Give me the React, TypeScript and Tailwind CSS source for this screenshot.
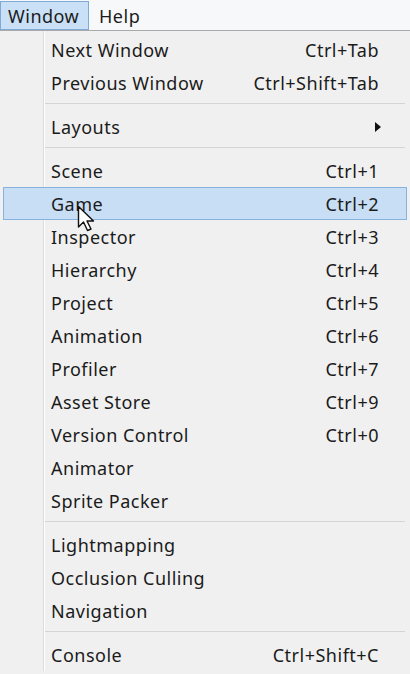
type Item = { label: string; shortcut?: string; submenu?: boolean; active?: boolean } | "sep";

const items: Item[] = [
  { label: "Next Window", shortcut: "Ctrl+Tab" },
  { label: "Previous Window", shortcut: "Ctrl+Shift+Tab" },
  "sep",
  { label: "Layouts", submenu: true },
  "sep",
  { label: "Scene", shortcut: "Ctrl+1" },
  { label: "Game", shortcut: "Ctrl+2", active: true },
  { label: "Inspector", shortcut: "Ctrl+3" },
  { label: "Hierarchy", shortcut: "Ctrl+4" },
  { label: "Project", shortcut: "Ctrl+5" },
  { label: "Animation", shortcut: "Ctrl+6" },
  { label: "Profiler", shortcut: "Ctrl+7" },
  { label: "Asset Store", shortcut: "Ctrl+9" },
  { label: "Version Control", shortcut: "Ctrl+0" },
  { label: "Animator" },
  { label: "Sprite Packer" },
  "sep",
  { label: "Lightmapping" },
  { label: "Occlusion Culling" },
  { label: "Navigation" },
  "sep",
  { label: "Console", shortcut: "Ctrl+Shift+C" },
];

function Cursor() {
  return (
    <svg
      className="absolute left-[77px] top-[205px]"
      width="20"
      height="28"
      viewBox="0 0 20 28"
    >
      <path
        d="M1.5 1.5 L1.5 22 L6.5 17 L10.5 25.5 L14 24 L10 16 L16.5 16 Z"
        fill="#ffffff"
        stroke="#111111"
        strokeWidth="1.4"
        strokeLinejoin="round"
      />
    </svg>
  );
}

export default function App() {
  return (
    <div
      className="relative w-[410px] h-[674px] overflow-hidden bg-[#f0f0f0] text-[#1b1b1b] text-[18px] tracking-[0.5px]"
      style={{ fontFamily: '"Noto Sans", "Open Sans", sans-serif' }}
    >
      {/* menu bar */}
      <div className="flex h-[31px] items-stretch bg-[#f7f8f9] border-b border-[#a9a9a9] pt-[1px]">
        <div className="flex items-center px-[7px] w-[89px] bg-[#c9e0f7] border border-[#7fa9d6] leading-none">
          Window
        </div>
        <div className="flex items-center pl-[10px] leading-none">Help</div>
      </div>

      {/* dropdown */}
      <div className="relative pt-[1.5px] bg-[linear-gradient(to_right,#f0f0f0_43px,#dcdcdc_43px,#dcdcdc_44px,#ffffff_44px,#ffffff_45px,#f0f0f0_45px)]">
        {items.map((it, i) =>
          it === "sep" ? (
            <div key={i} className="h-[11px] flex items-center pl-[45px] pr-[5px]">
              <div className="h-[2px] w-full border-t border-[#d5d5d5] border-b-white" />
            </div>
          ) : (
            <div
              key={i}
              className={
                "flex items-center h-[33px] pt-[2px] leading-none mx-[3px] pl-[47px] pr-[27px] border " +
                (it.active ? "bg-[#c8def5] border-[#86b2e0]" : "border-transparent")
              }
            >
              <span className="flex-1">{it.label}</span>
              {it.shortcut && <span>{it.shortcut}</span>}
              {it.submenu && (
                <svg width="8" height="12" viewBox="0 0 8 12" className="mr-[-3px]">
                  <path d="M1 1 L7 6 L1 11 Z" fill="#111" />
                </svg>
              )}
            </div>
          )
        )}
      </div>

      <Cursor />
    </div>
  );
}
